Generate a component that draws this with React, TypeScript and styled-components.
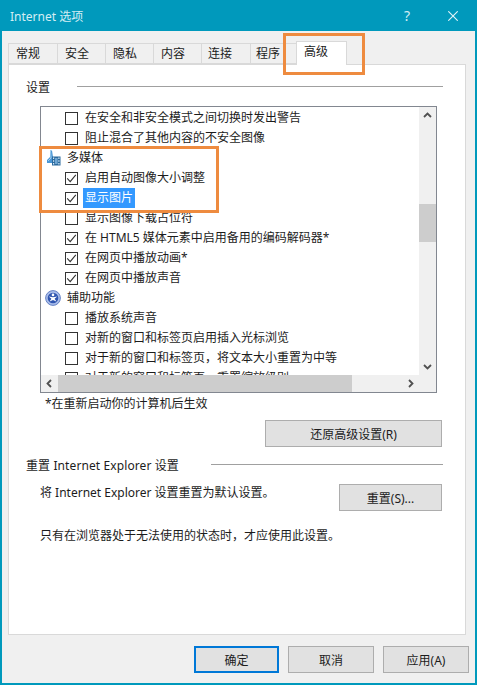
import React from 'react';
import styled, { createGlobalStyle } from 'styled-components';

const Global = createGlobalStyle`
  html, body { margin: 0; padding: 0; background: #f0f0f0; }
  * { box-sizing: border-box; }
  body { font-family: "Noto Sans", "Noto Sans CJK SC", sans-serif; font-size: 12px; color: #1c1c1c; }
`;

const Win = styled.div`
  position: relative;
  width: 477px;
  height: 685px;
  display: flex;
  flex-direction: column;
  background: #f0f0f0;
  border: 2px solid #0099bc;
  border-top: none;
  overflow: hidden;
`;
const TitleBar = styled.div`
  height: 31px;
  margin: 0 -2px;
  padding: 0 19px 0 10px;
  display: flex;
  align-items: center;
  background: #0099bc;
  color: #d4eef4;
  font-size: 12px;
`;
const Title = styled.div`flex: 1;`;
const Help = styled.div`
  width: 16px;
  margin-right: 33px;
  text-align: center;
  font-size: 14px;
`;
const Tabs = styled.div`
  height: 33px;
  padding: 9px 0 0 6px;
  display: flex;
  align-items: flex-end;
`;
const Tab = styled.div<{ $w: number; $pad: number; $on?: boolean }>`
  width: ${p => p.$w}px;
  height: ${p => (p.$on ? 24 : 21)}px;
  margin-bottom: ${p => (p.$on ? -1 : 0)}px;
  background: ${p => (p.$on ? '#fff' : '#f0f0f0')};
  border: 1px solid #d9d9d9;
  border-right-width: ${p => (p.$on ? 1 : 0)}px;
  border-bottom-width: ${p => (p.$on ? 0 : 1)}px;
  padding: 1px 0 0 ${p => p.$pad}px;
  line-height: 18px;
  z-index: ${p => (p.$on ? 1 : 0)};
`;
const Panel = styled.div`
  width: 458px;
  height: 571px;
  margin-left: 6px;
  padding: 14px 22px 0 17px;
  display: flex;
  flex-direction: column;
  background: #fff;
  border: 1px solid #d9d9d9;
`;
const Legend = styled.div<{ $top?: number; $gap: number }>`
  display: flex;
  align-items: center;
  gap: ${p => p.$gap}px;
  height: 17px;
  line-height: 17px;
  margin-top: ${p => p.$top ?? 0}px;
  letter-spacing: 0.1px;
`;
const Rule = styled.div`
  flex: 1;
  height: 1px;
  margin-top: -3px;
  background: #a0a0a0;
`;
const ListBox = styled.div`
  width: 397px;
  height: 287px;
  margin: 10px 0 0 14px;
  border: 1px solid #828790;
  display: grid;
  grid-template-columns: 378px 17px;
  grid-template-rows: 268px 17px;
`;
const ListBody = styled.div`
  padding-top: 1px;
  overflow: hidden;
`;
const Row = styled.div<{ $heading?: boolean }>`
  height: 20px;
  display: flex;
  align-items: center;
  padding-left: ${p => (p.$heading ? 4 : 24)}px;
  white-space: nowrap;
`;
const Box = styled.span`
  flex: none;
  width: 13px;
  height: 13px;
  margin-right: 5px;
  border: 1px solid #333;
  background: #fff;
  display: flex;
  align-items: center;
  justify-content: center;
`;
const Label = styled.span<{ $selected?: boolean }>`
  padding: 0 2px;
  height: 20px;
  line-height: 19px;
  background: ${p => (p.$selected ? '#3399ff' : 'transparent')};
  color: ${p => (p.$selected ? '#fff' : 'inherit')};
`;
const HeadIcon = styled.svg`
  flex: none;
  width: 16px;
  height: 16px;
  margin-right: 4px;
`;
const VTrack = styled.div`
  background: #f0f0f0;
  display: flex;
  flex-direction: column;
`;
const HTrack = styled.div`
  background: #f0f0f0;
  display: flex;
`;
const Corner = styled.div`background: #f0f0f0;`;
const Arrow = styled.svg`
  flex: none;
  width: 17px;
  height: 17px;
`;
const VSpace = styled.div<{ $h: number; $thumb?: boolean }>`
  height: ${p => p.$h}px;
  background: ${p => (p.$thumb ? '#cdcdcd' : 'transparent')};
`;
const HSpace = styled.div<{ $w: number; $thumb?: boolean }>`
  width: ${p => p.$w}px;
  background: ${p => (p.$thumb ? '#cdcdcd' : 'transparent')};
`;
const Note = styled.div`
  height: 17px;
  line-height: 17px;
  margin: 2px 0 0 19px;
`;
const Btn = styled.div<{ $w: number; $primary?: boolean }>`
  flex: none;
  width: ${p => p.$w}px;
  height: 27px;
  display: flex;
  align-items: center;
  justify-content: center;
  background: #e1e1e1;
  border: ${p => (p.$primary ? '2px solid #0078d7' : '1px solid #adadad')};
`;
const RestoreRow = styled.div`
  display: flex;
  justify-content: flex-end;
  margin: 8px 1px 0 0;
`;
const ResetRow = styled.div`
  display: flex;
  justify-content: space-between;
  margin: 10px 1px 0 14px;
`;
const Text = styled.div`
  height: 17px;
  line-height: 17px;
`;
const Hint = styled(Text)`
  margin: 16px 0 0 14px;
`;
const Footer = styled.div`
  display: flex;
  justify-content: flex-end;
  gap: 9px;
  padding: 11px 6px 0 0;
`;
const Mark = styled.div<{ $x: number; $y: number; $w: number; $h: number }>`
  position: absolute;
  left: ${p => p.$x}px;
  top: ${p => p.$y}px;
  width: ${p => p.$w}px;
  height: ${p => p.$h}px;
  border: 3px solid #ee8b3f;
  pointer-events: none;
`;

const Tick = () => (
  <svg width="11" height="11" viewBox="0 0 11 11" fill="none">
    <path d="M1.2 5.4 L4.2 8.6 L9.8 1.8" stroke="#333" strokeWidth="1.1" />
  </svg>
);

const MediaIcon = () => (
  <HeadIcon viewBox="0 0 16 16">
    <path d="M5 0.5 L7 0.5 L8 7 L8 13 L2 13 L2 10 L5 7Z" fill="#4a97d6" />
    <path d="M5.5 1 L6 8 L3 11" fill="none" stroke="#a9d2f0" strokeWidth="0.9" />
    <rect x="7" y="6.5" width="8.5" height="9" fill="#2b6a9e" />
    <path d="M8 7.5h1.2v1.5H8zM8 10.2h1.2v1.5H8zM8 13h1.2v1.5H8zM13.3 7.5h1.2v1.5h-1.2zM13.3 10.2h1.2v1.5h-1.2zM13.3 13h1.2v1.5h-1.2z" fill="#d6e9f7" />
    <rect x="10" y="8" width="2.6" height="6" fill="#6fa6d2" />
  </HeadIcon>
);

const AccessIcon = () => (
  <HeadIcon viewBox="0 0 16 16">
    <circle cx="8" cy="8" r="7.4" fill="#a9bdea" stroke="#5a78c0" strokeWidth="0.9" />
    <circle cx="8" cy="8" r="5.3" fill="#2f55b0" />
    <circle cx="8" cy="4.9" r="1.3" fill="#fff" />
    <path d="M3.8 6.6 L8 7.2 L12.2 6.6 L9.6 8.8 L11.4 11.6 L8 10 L4.6 11.6 L6.4 8.8Z" fill="#fff" />
  </HeadIcon>
);

const Chevron = ({ dir }: { dir: 'up' | 'down' | 'left' | 'right' }) => {
  const d = {
    up: 'M5 10 L8.5 6.5 L12 10',
    down: 'M5 7 L8.5 10.5 L12 7',
    left: 'M10 5 L6.5 8.5 L10 12',
    right: 'M7 5 L10.5 8.5 L7 12',
  }[dir];
  return (
    <Arrow viewBox="0 0 17 17" fill="none">
      <path d={d} stroke="#505050" strokeWidth="1.8" />
    </Arrow>
  );
};

type Item = { t: string; c?: boolean; h?: 'media' | 'access'; s?: boolean };
const items: Item[] = [
  { t: '在安全和非安全模式之间切换时发出警告' },
  { t: '阻止混合了其他内容的不安全图像' },
  { t: '多媒体', h: 'media' },
  { t: '启用自动图像大小调整', c: true },
  { t: '显示图片', c: true, s: true },
  { t: '显示图像下载占位符' },
  { t: '在 HTML5 媒体元素中启用备用的编码解码器*', c: true },
  { t: '在网页中播放动画*', c: true },
  { t: '在网页中播放声音', c: true },
  { t: '辅助功能', h: 'access' },
  { t: '播放系统声音' },
  { t: '对新的窗口和标签页启用插入光标浏览' },
  { t: '对于新的窗口和标签页，将文本大小重置为中等' },
  { t: '对于新的窗口和标签页，重置缩放级别' },
];

const tabs: [string, number, number][] = [
  ['常规', 49, 7], ['安全', 48, 7], ['隐私', 48, 7], ['内容', 48, 7], ['连接', 49, 6], ['程序', 46, 5],
];

export default function App() {
  return (
    <>
      <Global />
      <Win>
        <TitleBar>
          <Title>Internet 选项</Title>
          <Help>?</Help>
          <svg width="10" height="10" viewBox="0 0 10 10" fill="none">
            <path d="M0.3 0.3 L9.7 9.7 M9.7 0.3 L0.3 9.7" stroke="#e3f4f8" strokeWidth="1.1" />
          </svg>
        </TitleBar>
        <Tabs>
          {tabs.map(([t, w, pad]) => (
            <Tab key={t} $w={w} $pad={pad}>{t}</Tab>
          ))}
          <Tab $w={51} $pad={7} $on>高级</Tab>
        </Tabs>
        <Panel>
          <Legend $gap={27}>
            设置
            <Rule />
          </Legend>
          <ListBox>
            <ListBody>
              {items.map(it =>
                it.h ? (
                  <Row key={it.t} $heading>
                    {it.h === 'media' ? <MediaIcon /> : <AccessIcon />}
                    <Label>{it.t}</Label>
                  </Row>
                ) : (
                  <Row key={it.t}>
                    <Box>{it.c && <Tick />}</Box>
                    <Label $selected={it.s}>{it.t}</Label>
                  </Row>
                )
              )}
            </ListBody>
            <VTrack>
              <Chevron dir="up" />
              <VSpace $h={80} />
              <VSpace $h={38} $thumb />
              <VSpace $h={116} />
              <Chevron dir="down" />
            </VTrack>
            <HTrack>
              <Chevron dir="left" />
              <HSpace $w={294} $thumb />
              <HSpace $w={50} />
              <Chevron dir="right" />
            </HTrack>
            <Corner />
          </ListBox>
          <Note>*在重新启动你的计算机后生效</Note>
          <RestoreRow>
            <Btn $w={177}>还原高级设置(R)</Btn>
          </RestoreRow>
          <Legend $top={10} $gap={32}>
            重置 Internet Explorer 设置
            <Rule />
          </Legend>
          <ResetRow>
            <Text>将 Internet Explorer 设置重置为默认设置。</Text>
            <Btn $w={103}>重置(S)...</Btn>
          </ResetRow>
          <Hint>只有在浏览器处于无法使用的状态时，才应使用此设置。</Hint>
        </Panel>
        <Footer>
          <Btn $w={85} $primary>确定</Btn>
          <Btn $w={86}>取消</Btn>
          <Btn $w={86}>应用(A)</Btn>
        </Footer>
        <Mark $x={281} $y={33} $w={82} $h={42} />
        <Mark $x={37} $y={146} $w={180} $h={67} />
      </Win>
    </>
  );
}
